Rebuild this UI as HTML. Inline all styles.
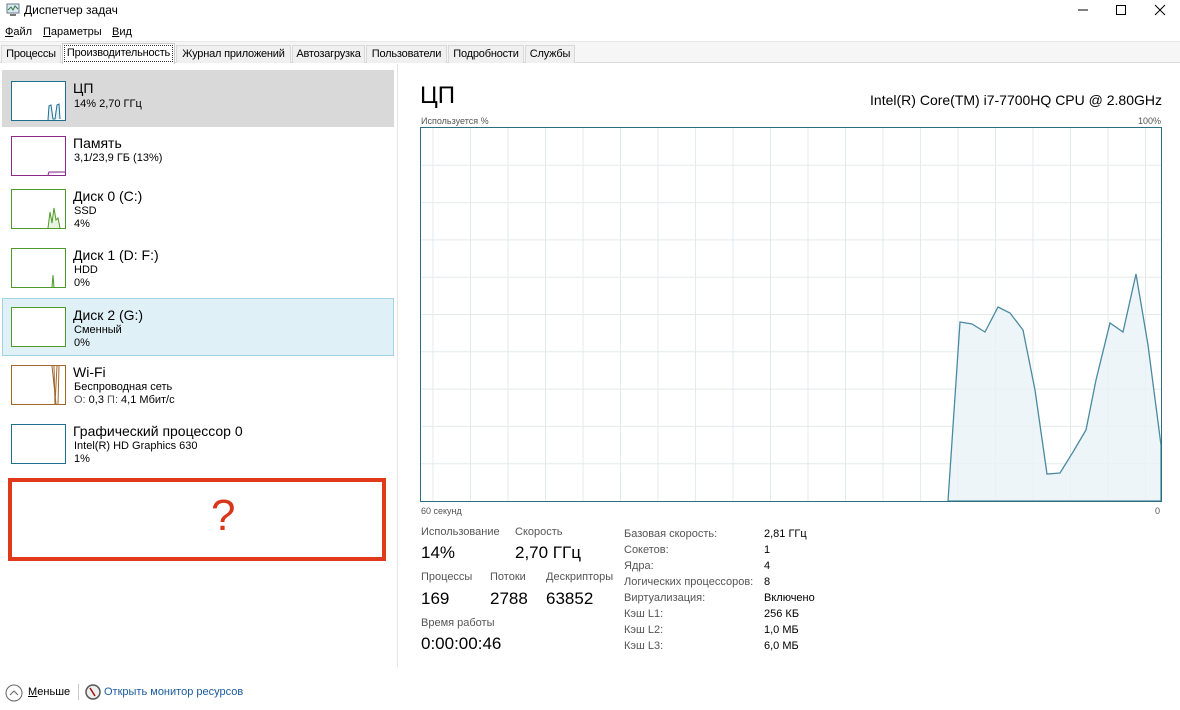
<!DOCTYPE html>
<html><head><meta charset="utf-8"><style>
*{margin:0;padding:0;box-sizing:border-box}
body{width:1180px;height:710px;background:#fff;font-family:"Liberation Sans","Noto Sans CJK SC",sans-serif;color:#000;position:relative;overflow:hidden}
.a{position:absolute;white-space:nowrap}
.s{font-size:12px}
.t{font-size:11px}
.g{color:#555}
.tab{position:absolute;top:45px;height:18px;font-size:11px;padding:2px 0;text-align:center;white-space:nowrap;overflow:hidden;letter-spacing:-0.2px;border:1px solid #d9d9d9;border-bottom:none;background:#f0f0f0}
.item{position:absolute;left:2px;width:392px;height:57px}
.th{position:absolute;left:9px;width:55px;height:40px;background:#fff}
.n{position:absolute;left:71px;top:0;font-size:14px}
.l1{position:absolute;left:72px;font-size:11px}
</style></head><body>
<svg class="a" style="left:5px;top:3px" width="16" height="14" viewBox="0 0 16 14"><rect x="2" y="1" width="12" height="9" fill="#dde8f2" stroke="#6a7a8a"/><polyline points="3,7 6,4 8,7 10,3 13,6" fill="none" stroke="#2a7a3a"/><rect x="5" y="11" width="6" height="2" fill="#777"/></svg>
<div class="a s" style="left:24px;top:3px">Диспетчер задач</div>
<svg class="a" style="left:1075px;top:4px" width="95" height="12"><line x1="3" y1="6" x2="13" y2="6" stroke="#000"/><rect x="41.5" y="1.5" width="9" height="9" fill="none" stroke="#000"/><path d="M80 1L90 11M90 1L80 11" stroke="#000"/></svg>
<div class="a t" style="left:5px;top:26px"><u>Ф</u>айл</div>
<div class="a t" style="left:43px;top:26px"><u>П</u>араметры</div>
<div class="a t" style="left:112px;top:26px"><u>В</u>ид</div>
<div class="a" style="left:0;top:41px;width:1180px;height:22px;background:#f6f6f6;border-top:1px solid #e8e8e8;border-bottom:1px solid #d9d9d9"></div>
<div class="tab" style="left:1px;width:60px">Процессы</div>
<div class="tab" style="left:62px;width:113px;top:43px;height:21px;padding-top:3px;background:#fff;outline:1px dotted #333;outline-offset:-3px;border-color:#ccc">Производительность</div>
<div class="tab" style="left:176px;width:115px">Журнал приложений</div>
<div class="tab" style="left:292px;width:73px">Автозагрузка</div>
<div class="tab" style="left:366px;width:81px">Пользователи</div>
<div class="tab" style="left:448px;width:76px">Подробности</div>
<div class="tab" style="left:525px;width:50px">Службы</div>

<div class="a" style="left:397px;top:64px;width:1px;height:603px;background:#e5e5e5"></div>

<div class="item" style="top:70px;background:#d9d9d9">
<div class="th" style="top:11px;border:1px solid #1f6f8f"><svg width="53" height="38" style="position:absolute;left:0;top:0"><polyline points="36,38 37,24 39,23 41,37 43,37 45,23 47,22 48,37" fill="#e4eef5" stroke="#1f6f8f"/></svg></div>
<div class="n" style="top:10px">ЦП</div><div class="l1" style="top:28px">14% 2,70 ГГц</div></div>
<div class="item" style="top:129px">
<div class="th" style="top:7px;border:1px solid #8b2a8b"><svg width="53" height="38" style="position:absolute;left:0;top:0"><polyline points="36,38 37,35 53,35" fill="#f3e6f3" stroke="#8b2a8b"/></svg></div>
<div class="n" style="top:6px">Память</div><div class="l1" style="top:23px">3,1/23,9 ГБ (13%)</div></div>
<div class="item" style="top:188px">
<div class="th" style="top:1px;border:1px solid #4d9a2a"><svg width="53" height="38" style="position:absolute;left:0;top:0"><polyline points="36,38 38,22 40,33 42,18 44,30 46,28 48,38" fill="#e9f4e2" stroke="#4d9a2a"/></svg></div>
<div class="n" style="top:0">Диск 0 (C:)</div><div class="l1" style="top:17px">SSD</div><div class="l1" style="top:30px">4%</div></div>
<div class="item" style="top:247px">
<div class="th" style="top:1px;border:1px solid #4d9a2a"><svg width="53" height="38" style="position:absolute;left:0;top:0"><polyline points="40,38 41,26 42,38" fill="#e9f4e2" stroke="#4d9a2a"/></svg></div>
<div class="n" style="top:0">Диск 1 (D: F:)</div><div class="l1" style="top:17px">HDD</div><div class="l1" style="top:30px">0%</div></div>
<div class="item" style="top:298px;height:58px;background:#dff0f7;border:1px solid #9fd3e6">
<div class="th" style="top:8px;left:8px;border:1px solid #4d9a2a"></div>
<div class="n" style="top:8px;left:70px">Диск 2 (G:)</div><div class="l1" style="top:25px;left:71px">Сменный</div><div class="l1" style="top:38px;left:71px">0%</div></div>
<div class="item" style="top:364px">
<div class="th" style="top:1px;border:1px solid #a0662a"><svg width="53" height="38" style="position:absolute;left:0;top:0"><path d="M40 0L44 38M42 0L43 38M45 0L43 38M47 0L46 38" fill="none" stroke="#a0662a"/></svg></div>
<div class="n" style="top:0">Wi-Fi</div><div class="l1" style="top:17px">Беспроводная сеть</div><div class="l1" style="top:30px"><span class="g">О:</span> 0,3 <span class="g">П:</span> 4,1 Мбит/с</div></div>
<div class="item" style="top:423px">
<div class="th" style="top:1px;border:1px solid #1f6f8f"></div>
<div class="n" style="top:0">Графический процессор 0</div><div class="l1" style="top:17px">Intel(R) HD Graphics 630</div><div class="l1" style="top:30px">1%</div></div>

<div class="a" style="left:8px;top:478px;width:378px;height:83px;border:4px solid #e03a1a"></div>
<div class="a" style="left:211px;top:494px;font-size:44px;color:#d8361a;font-family:'Liberation Sans',sans-serif;line-height:1">?</div>

<svg class="a" style="left:5px;top:684px" width="18" height="18"><circle cx="9" cy="9" r="8" fill="none" stroke="#666"/><polyline points="5,11 9,7 13,11" fill="none" stroke="#666"/></svg>
<div class="a t" style="left:28px;top:686px"><u>М</u>еньше</div>
<div class="a" style="left:78px;top:684px;width:1px;height:16px;background:#ccc"></div>
<svg class="a" style="left:85px;top:684px" width="16" height="16"><circle cx="8" cy="8" r="7" fill="#eee" stroke="#555" stroke-width="1.5"/><line x1="5" y1="4" x2="10" y2="12" stroke="#a01010" stroke-width="1.5"/></svg>
<div class="a t" style="left:104px;top:686px;color:#1a5a9a">Открыть монитор ресурсов</div>

<div class="a" style="left:420px;top:82px;font-size:24px">ЦП</div>
<div class="a" style="right:18px;top:92px;font-size:14px">Intel(R) Core(TM) i7-7700HQ CPU @ 2.80GHz</div>
<div class="a g" style="left:421px;top:116px;font-size:9px">Используется %</div>
<div class="a g" style="right:19px;top:116px;font-size:9px">100%</div>
<svg class="a" style="left:420px;top:127px" width="742" height="376">
<g stroke="#e4eaec" stroke-width="1">
<path d="M1 38.3H741M1 75.6H741M1 112.9H741M1 150.2H741M1 187.5H741M1 224.8H741M1 262.1H741M1 299.4H741M1 336.7H741"/>
<path d="M13 1V375M50.5 1V375M88 1V375M125.5 1V375M163 1V375M200.5 1V375M238 1V375M275.5 1V375M313 1V375M350.5 1V375M388 1V375M425.5 1V375M463 1V375M500.5 1V375M538 1V375M575.5 1V375M613 1V375M650.5 1V375M688 1V375M725.5 1V375"/>
</g>
<polygon points="528,374 540,195 552,197 565,205 578,180 590,186 603,203 615,263 627,347 640,346 653,325 666,303 676,253 690,196 703,205 716,147 728,218 741,318 741,374" fill="#e9f2f8" fill-opacity=".8" stroke="#4a8aa0" stroke-width="1.3"/>
<rect x="0.5" y="0.5" width="741" height="374" fill="none" stroke="#2a6e80"/>
</svg>
<div class="a g" style="left:421px;top:506px;font-size:9px">60 секунд</div>
<div class="a g" style="left:1155px;top:506px;font-size:9px">0</div>

<div class="a t g" style="left:421px;top:526px">Использование</div>
<div class="a t g" style="left:515px;top:526px">Скорость</div>
<div class="a" style="left:421px;top:543px;font-size:17px">14%</div>
<div class="a" style="left:515px;top:543px;font-size:17px">2,70 ГГц</div>
<div class="a t g" style="left:421px;top:571px">Процессы</div>
<div class="a t g" style="left:490px;top:571px">Потоки</div>
<div class="a t g" style="left:546px;top:571px">Дескрипторы</div>
<div class="a" style="left:421px;top:589px;font-size:17px">169</div>
<div class="a" style="left:490px;top:589px;font-size:17px">2788</div>
<div class="a" style="left:546px;top:589px;font-size:17px">63852</div>
<div class="a t g" style="left:421px;top:617px">Время работы</div>
<div class="a" style="left:421px;top:634px;font-size:17px">0:00:00:46</div>

<div class="a t g" style="left:624px;top:526px;line-height:16px">Базовая скорость:<br>Сокетов:<br>Ядра:<br>Логических процессоров:<br>Виртуализация:<br>Кэш L1:<br>Кэш L2:<br>Кэш L3:</div>
<div class="a t" style="left:764px;top:526px;line-height:16px">2,81 ГГц<br>1<br>4<br>8<br>Включено<br>256 КБ<br>1,0 МБ<br>6,0 МБ</div>
</body></html>
